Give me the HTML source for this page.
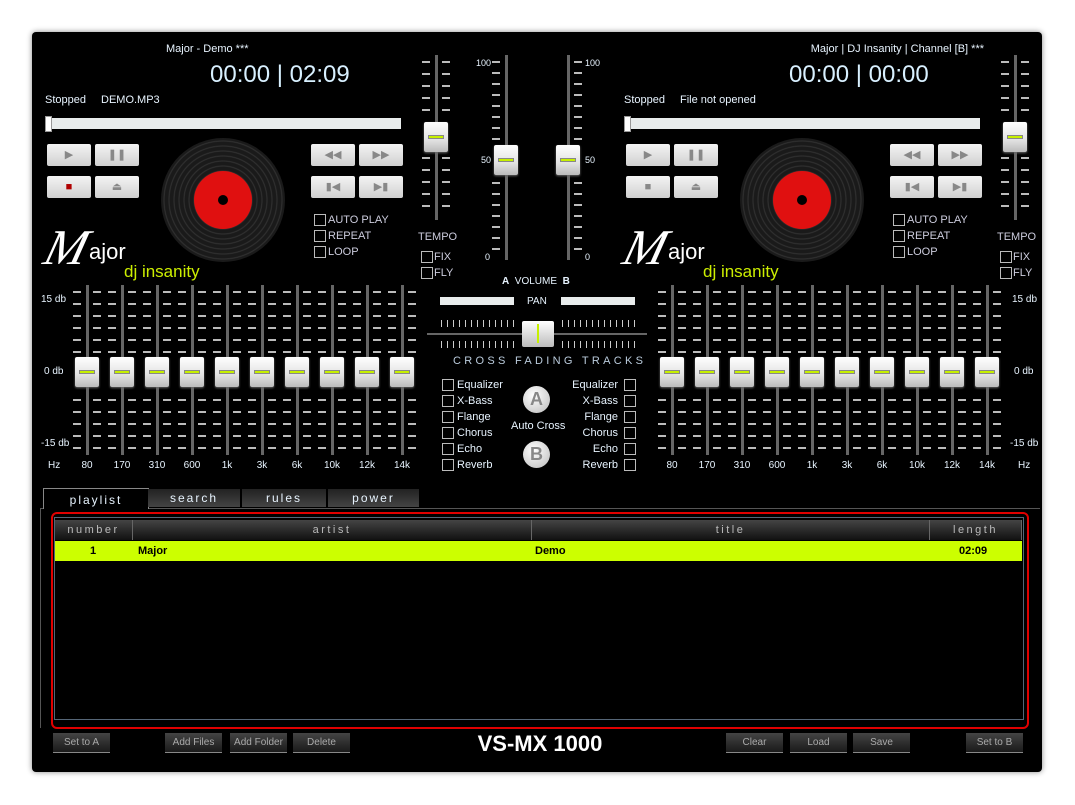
<!DOCTYPE html>
<html><head><meta charset="utf-8"><style>
body{margin:0;width:1075px;height:805px;background:#fff;position:relative;overflow:hidden;font-family:"Liberation Sans",sans-serif;}
#w{position:absolute;left:32px;top:32px;width:1010px;height:740px;background:#000;border-radius:4px;box-shadow:0 0 6px #888;}
.a{position:absolute;}
.t{position:absolute;color:#e8f4ff;font-size:11px;white-space:nowrap;line-height:12px}
.btn{position:absolute;width:44px;height:22px;background:linear-gradient(#f4f4f4,#d0d0d0);border-radius:2px;}
.cb{position:absolute;width:10px;height:10px;border:1px solid #bbb;}
.knob{position:absolute;width:24px;height:30px;background:linear-gradient(#fff,#e2e2e2 60%,#bbb);border-radius:2px;box-shadow:0 1px 2px #666}
.knob:after{content:"";position:absolute;left:5px;right:5px;top:14px;height:2px;background:#c6f000;box-shadow:0 0 0 1px #888}
.bb{position:absolute;height:19px;top:733px;background:linear-gradient(#444,#1a1a1a);color:#aaa;font-size:10px;text-align:center;line-height:19px;border-bottom:1px solid #888}
</style></head><body>
<div id="w"></div>
<div id="c"></div>
<script>
var h='';
function T(x,y,s,st){h+='<div class="t" style="left:'+x+'px;top:'+y+'px;'+(st||'')+'">'+s+'</div>';}
function D(x,y,w,hh,st){h+='<div class="a" style="left:'+x+'px;top:'+y+'px;width:'+w+'px;height:'+hh+'px;'+st+'"></div>';}
function vslider(x,y1,y2,ky,big,side){
 D(x-1,y1,3,y2-y1,'background:#666');
 for(var y=y1+6;y<y2-4;y+=(big?12:11)){ if(Math.abs(y-ky-15)<20)continue; if(side!=2)D(x-14,y,8,2,'background:#bbb');if(side!=1)D(x+6,y,8,2,'background:#bbb');}
 h+='<div class="knob" style="left:'+(x-12)+'px;top:'+ky+'px"></div>';
}
function deck(o,title,tright,file,t2){
 if(tright) T(0,43,title,'width:984px;text-align:right'); else T(166,43,title);
 T(o+163,61,'00:00 | '+t2,'font-size:24px;line-height:28px;color:#d8f0ff');
 T(o-2,94,'Stopped');T(o+54,94,file);
 D(o-2,118,356,11,'background:#e8ecec');D(o-2,116,5,14,'background:#fff;border:1px solid #999');
 var bx=[0,48,264,312];
 var ic=['▶','❚❚','◀◀','▶▶'],ic2=['■','⏏','▮◀','▶▮'];
 for(var i=0;i<4;i++){h+='<div class="btn" style="left:'+(o+bx[i])+'px;top:144px;color:#888;font-size:11px;text-align:center;line-height:22px">'+ic[i]+'</div>';
 h+='<div class="btn" style="left:'+(o+bx[i])+'px;top:176px;color:'+(i==0&&o<100?'#b00000':'#888')+';font-size:11px;text-align:center;line-height:22px">'+ic2[i]+'</div>';}
 var cx=o+176;
 h+='<div class="a" style="left:'+(cx-62)+'px;top:138px;width:124px;height:124px;border-radius:50%;background:repeating-radial-gradient(circle,#1a1a1a 0 3px,#333 4px,#1a1a1a 5px)"></div>';
 D(cx-29,171,58,58,'border-radius:50%;background:#e01010');D(cx-5,195,10,10,'border-radius:50%;background:#000');
 ['AUTO PLAY','REPEAT','LOOP'].forEach(function(s,i){h+='<div class="cb" style="left:'+(o+267)+'px;top:'+(214+i*16)+'px"></div>';T(o+281,214+i*16,s,'color:#ccd');});
 T(o-2,222,'<i style="font-size:50px">M</i>','font-family:Liberation Serif;font-size:30px;line-height:50px;color:#fff;transform:skewX(-15deg)');
 T(o+42,240,'ajor','font-size:22px;line-height:24px;color:#fff');
 T(o+77,262,'dj insanity','font-size:17px;line-height:20px;color:#ccee00');
 T(o+371,231,'TEMPO','color:#ccd');
 ['FIX','FLY'].forEach(function(s,i){h+='<div class="cb" style="left:'+(o+374)+'px;top:'+(251+i*16)+'px"></div>';T(o+387,251+i*16,s,'color:#ccd');});
 vslider(o+389,55,220,122,1);
}
deck(47,'Major - Demo ***',0,'DEMO.MP3','02:09');
deck(626,'Major | DJ Insanity | Channel [B] ***',1,'File not opened','00:00');
var hz=['80','170','310','600','1k','3k','6k','10k','12k','14k'];
function eq(x0){for(var i=0;i<10;i++){var x=x0+i*35;vslider(x,285,455,357,1);T(x-10,460,hz[i],'width:20px;text-align:center;font-size:10px');}}
eq(87);eq(672);
T(41,294,'15 db','font-size:10px');T(44,366,'0 db','font-size:10px');T(41,438,'-15 db','font-size:10px');T(48,460,'Hz','font-size:10px');
T(1012,294,'15 db','font-size:10px');T(1014,366,'0 db','font-size:10px');T(1010,438,'-15 db','font-size:10px');T(1018,460,'Hz','font-size:10px');
vslider(506,55,260,145,0,1);vslider(568,55,260,145,0,2);
T(476,57,'100','font-size:9px');T(481,154,'50','font-size:9px');T(485,251,'0','font-size:9px');
T(585,57,'100','font-size:9px');T(585,154,'50','font-size:9px');T(585,251,'0','font-size:9px');
T(502,276,'<b>A</b> &nbsp;VOLUME &nbsp;<b>B</b>','font-size:10px');
D(440,297,74,8,'background:#e8ecec');D(561,297,74,8,'background:#e8ecec');T(527,296,'PAN','font-size:10px');
D(427,333,220,2,'background:#666');
for(var x=441;x<515;x+=6){D(x,320,1,7,'background:#ccc');D(x,341,1,7,'background:#ccc');D(x+121,320,1,7,'background:#ccc');D(x+121,341,1,7,'background:#ccc');}
D(522,321,32,26,'background:linear-gradient(#fff,#bbb);border-radius:2px');D(537,324,2,19,'background:#c6f000');
T(453,355,'CROSS FADING TRACKS','font-size:11px;letter-spacing:3.3px;color:#bcd');
['Equalizer','X-Bass','Flange','Chorus','Echo','Reverb'].forEach(function(s,i){var y=379+i*16;h+='<div class="cb" style="left:442px;top:'+y+'px"></div>';T(457,y,s);h+='<div class="cb" style="left:624px;top:'+y+'px"></div>';T(518,y,s,'width:100px;text-align:right');});
h+='<div class="a" style="left:523px;top:386px;width:27px;height:27px;border-radius:50%;background:radial-gradient(circle at 40% 35%,#fff,#bbb);color:#888;font:bold 18px/27px Liberation Sans;text-align:center">A</div>';
h+='<div class="a" style="left:523px;top:441px;width:27px;height:27px;border-radius:50%;background:radial-gradient(circle at 40% 35%,#fff,#bbb);color:#888;font:bold 18px/27px Liberation Sans;text-align:center">B</div>';
T(511,420,'Auto Cross');
D(40,508,1000,1,'background:#555');D(40,508,1,220,'background:#555');
h+='<div class="t" style="left:43px;top:488px;width:104px;height:20px;background:#000;border:1px solid #888;border-bottom:none;text-align:center;line-height:22px;letter-spacing:2px;font-size:12px">playlist</div>';
[[148,92,'search'],[242,84,'rules'],[328,91,'power']].forEach(function(a){h+='<div class="t" style="left:'+a[0]+'px;top:489px;width:'+a[1]+'px;height:18px;background:linear-gradient(#222,#444);border-right:2px solid #000;text-align:center;line-height:18px;letter-spacing:2px;font-size:12px">'+a[2]+'</div>';});
D(51,512,974,213,'border:2px solid #e00000;border-radius:6px');
D(54,517,968,201,'border:1px solid #567;background:#000');
D(55,520,967,20,'background:linear-gradient(#444,#111)');
[[55,78,'number'],[133,399,'artist'],[532,398,'title'],[930,92,'length']].forEach(function(a){h+='<div class="t" style="left:'+a[0]+'px;top:520px;width:'+(a[1]-1)+'px;border-right:1px solid #666;text-align:center;line-height:20px;letter-spacing:2.5px;color:#bbb">'+a[2]+'</div>';});
D(55,541,967,20,'background:#ccff00');
T(90,545,'<b>1</b>','color:#000');T(138,545,'<b>Major</b>','color:#000');T(535,545,'<b>Demo</b>','color:#000');T(959,545,'<b>02:09</b>','color:#000');
[[53,'Set to A'],[165,'Add Files'],[230,'Add Folder'],[293,'Delete'],[726,'Clear'],[790,'Load'],[853,'Save'],[966,'Set to B']].forEach(function(a){h+='<div class="bb" style="left:'+a[0]+'px;width:57px">'+a[1]+'</div>';});
T(440,731,'VS-MX 1000','font-size:22px;line-height:26px;font-weight:bold;width:200px;text-align:center;color:#fff');
document.getElementById('c').innerHTML=h;
</script>
</body></html>
